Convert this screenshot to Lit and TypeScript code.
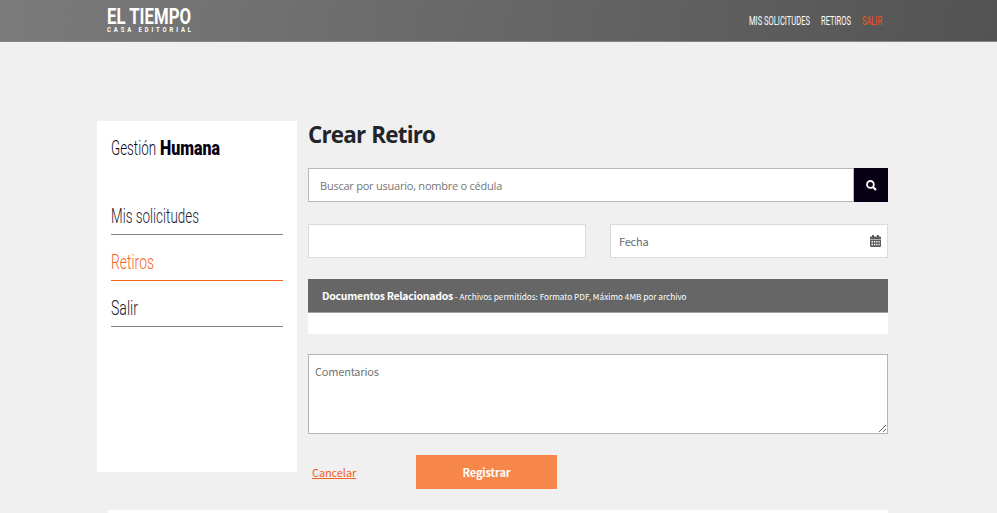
import { LitElement, html, css } from "lit";
import { customElement, property } from "lit/decorators.js";
import { styleMap } from "lit/directives/style-map.js";

/** One line of text condensed to a fixed measure. */
@customElement("fit-label")
class FitLabel extends LitElement {
  @property() text = "";
  @property({ type: Number }) width = 100;
  @property({ type: Number }) height = 20;

  static styles = css`
    :host { display: block; flex: none; }
    .box { display: block; white-space: nowrap; }
    .text { display: inline-block; vertical-align: top; transform-origin: 0 0; }
  `;

  updated() {
    const el = this.renderRoot.querySelector(".text") as HTMLElement;
    el.style.transform = "none";
    const natural = el.getBoundingClientRect().width;
    if (natural) el.style.transform = `scaleX(${this.width / natural})`;
  }

  render() {
    const size = { width: `${this.width}px`, height: `${this.height}px`, lineHeight: `${this.height}px` };
    return html`<span class="box" style=${styleMap(size)}><span class="text">${this.text}</span></span>`;
  }
}

@customElement("app-root")
class AppRoot extends LitElement {
  static styles = css`
    :host {
      display: block;
      height: 513px;
      overflow: hidden;
      background: #f0f0f0;
      font-family: "Noto Sans CJK SC", "Noto Sans", sans-serif;
      color: #212529;
    }
    * { box-sizing: border-box; }
    header {
      height: 42px;
      padding: 0 115px 0 107px;
      display: flex;
      justify-content: space-between;
      background: linear-gradient(100deg, #7b7b7b, #535353);
      border-bottom: 1px solid #858585;
      color: #fff;
    }
    .brand { padding-top: 8px; }
    .brand-main { font: 700 22.5px Roboto, sans-serif; }
    .brand-sub { font: 700 7px Roboto, sans-serif; letter-spacing: 3.4px; }
    nav.top { display: flex; gap: 11px; padding-top: 14px; font: 400 12.2px Roboto, sans-serif; }
    .top .on { color: #f4511e; }
    .page { display: flex; gap: 11px; padding: 79px 0 0 97px; height: 468px; }
    aside {
      width: 200px;
      height: 351px;
      background: #fff;
      padding: 17px 14px 0;
      color: #0b0818;
      font: 300 20.5px Roboto, sans-serif;
    }
    .title { display: flex; gap: 4px; height: 51px; }
    .title .strong { font-weight: 900; color: #050014; }
    .item { height: 46px; padding-top: 17px; border-bottom: 1px solid #85848b; color: #1c1930; }
    .item.on { color: #f26322; border-color: #f26322; }
    main { width: 580px; }
    h1 {
      margin: 0;
      height: 47px;
      font: 700 22.4px/28px "Open Sans", sans-serif;
      letter-spacing: -0.8px;
      word-spacing: 1px;
    }
    input, textarea {
      display: block;
      margin: 0;
      border: 1px solid #d9dbdd;
      border-radius: 0;
      background: #fff;
      outline: 0;
      font: 400 11px "Noto Sans CJK SC", sans-serif;
      letter-spacing: -0.2px;
    }
    input::placeholder { color: #646a70; opacity: 1; }
    .search { display: flex; height: 34px; margin-bottom: 22px; }
    .search input {
      flex: 1;
      min-width: 0;
      padding: 1px 11px 0;
      border-color: #b9b9b9;
      font: 400 11px "Open Sans", sans-serif;
      letter-spacing: -0.23px;
    }
    .search input::placeholder { color: #757575; }
    .search button {
      width: 34px;
      padding: 0;
      border: 0;
      background: #070014;
      color: #fff;
      display: grid;
      place-items: center;
    }
    .search svg { display: block; }
    .pair { display: flex; gap: 24px; height: 34px; margin-bottom: 21px; }
    .field { flex: 1; position: relative; }
    .field input { width: 100%; height: 34px; padding: 0 8px; }
    .field svg { position: absolute; right: 7px; top: 11px; }
    .docs-head {
      height: 34px;
      padding-left: 14px;
      background: #666;
      border-bottom: 1px solid #a0a0a0;
      color: #fff;
      font-size: 8.2px;
      line-height: 33px;
      white-space: nowrap;
    }
    .docs-head b { font-size: 10.5px; letter-spacing: -0.26px; }
    .docs-body { height: 21px; background: #fff; margin-bottom: 20px; }
    textarea {
      width: 580px;
      height: 80px;
      padding: 7px 6px;
      border-color: #b5b5b5;
      line-height: 18px;
    }
    textarea::placeholder { color: #757575; opacity: 1; }
    .actions { display: flex; margin-top: 21px; height: 34px; align-items: center; font-size: 11px; }
    .cancel { width: 108px; padding-left: 4px; color: #f26322; text-decoration: underline; letter-spacing: -0.1px; }
    .actions button {
      width: 141px;
      height: 34px;
      padding: 0;
      border: 0;
      background: #f6864a;
      color: #fff;
      font: 700 11px "Noto Sans CJK SC", sans-serif;
      letter-spacing: -0.15px;
    }
    footer { height: 3px; width: 780px; margin-left: 108px; background: #fff; }
  `;

  render() {
    return html`
      <header>
        <div class="brand">
          <fit-label class="brand-main" text="EL TIEMPO" width="84" height="17"></fit-label>
          <fit-label class="brand-sub" text="CASA EDITORIAL" width="87" height="10"></fit-label>
        </div>
        <nav class="top">
          <fit-label text="MIS SOLICITUDES" width="61" height="14"></fit-label>
          <fit-label text="RETIROS" width="30" height="14"></fit-label>
          <fit-label class="on" text="SALIR" width="20" height="14"></fit-label>
        </nav>
      </header>
      <div class="page">
        <aside>
          <div class="title">
            <fit-label text="Gestión" width="45"></fit-label>
            <fit-label class="strong" text="Humana" width="60"></fit-label>
          </div>
          <div class="item"><fit-label text="Mis solicitudes" width="88"></fit-label></div>
          <div class="item on"><fit-label text="Retiros" width="43"></fit-label></div>
          <div class="item"><fit-label text="Salir" width="27"></fit-label></div>
        </aside>
        <main>
          <h1>Crear Retiro</h1>
          <div class="search">
            <input placeholder="Buscar por usuario, nombre o cédula" />
            <button aria-label="Buscar">
              <svg width="11" height="11" viewBox="0 0 11 11" fill="none" stroke="currentColor">
                <circle cx="4.4" cy="4.4" r="3.4" stroke-width="1.8" />
                <path d="M7 7 10 10" stroke-width="2.2" />
              </svg>
            </button>
          </div>
          <div class="pair">
            <div class="field"><input /></div>
            <div class="field">
              <input placeholder="Fecha" />
              <svg width="11" height="12" viewBox="0 0 11 12">
                <path fill="#5c5c5c" fill-rule="evenodd" d="M2 0h2v1.5h3V0h2v1.5h1q1 0 1 1V4H0V2.500q0-1 1-1h1zM0 4.600h11V11q0 1-1 1H1q-1 0-1-1zM1.500 6v1.500H3V6zM4 6v1.500h1.200V6zM6.200 6v1.500h1.200V6zM8.400 6v1.500h1.200V6zM1.500 8.800v1.500H3V8.800zM4 8.800v1.500h1.200V8.800zM6.200 8.800v1.500h1.200V8.800zM8.400 8.800v1.500h1.200V8.800z" />
              </svg>
            </div>
          </div>
          <div class="docs-head"><b>Documentos Relacionados</b> - Archivos permitidos: Formato PDF, Máximo 4MB por archivo</div>
          <div class="docs-body"></div>
          <textarea placeholder="Comentarios"></textarea>
          <div class="actions">
            <a class="cancel">Cancelar</a>
            <button>Registrar</button>
          </div>
        </main>
      </div>
      <footer></footer>
    `;
  }
}
